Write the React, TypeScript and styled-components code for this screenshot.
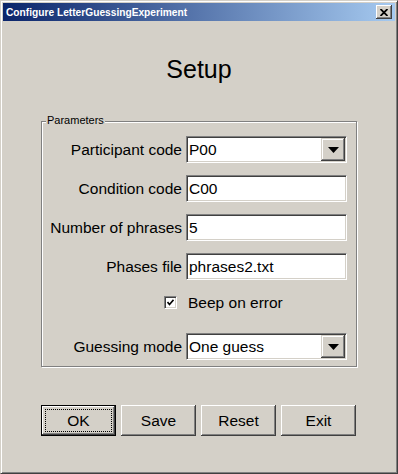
import React from "react";
import styled, { createGlobalStyle } from "styled-components";

const Global = createGlobalStyle`
  html, body { margin: 0; padding: 0; background: #D4D0C8; }
  body { font-family: "Liberation Sans", Arial, sans-serif; color: #000; }
  * { box-sizing: border-box; }
`;

const Window = styled.div`
  width: 398px;
  height: 474px;
  background: #d4d0c8;
  border: 1px solid;
  border-color: #d4d0c8 #404040 #404040 #d4d0c8;
  box-shadow: inset 1px 1px 0 #ffffff, inset -1px -1px 0 #808080;
  padding: 2px;
  display: flex;
  flex-direction: column;
`;

const TitleBar = styled.div`
  height: 18px;
  flex: none;
  display: flex;
  align-items: center;
  justify-content: space-between;
  padding: 0 3px 0 3px;
  background: linear-gradient(to right, #0a246a, #a6caf0);
`;

const TitleText = styled.span`
  color: #ffffff;
  font-weight: bold;
  font-size: 10.2px;
  line-height: 13px;
  white-space: nowrap;
`;

const CloseButton = styled.div`
  width: 16px;
  height: 14px;
  background: #d4d0c8;
  display: flex;
  align-items: center;
  justify-content: center;
  box-shadow: inset -1px -1px 0 #404040, inset 1px 1px 0 #ffffff,
    inset -2px -2px 0 #808080;
`;

const Body = styled.div`
  flex: 1;
  display: flex;
  flex-direction: column;
`;

const Heading = styled.h1`
  margin: 33px 0 37px;
  font-size: 25px;
  line-height: 30px;
  font-weight: normal;
  text-align: center;
`;

const Group = styled.div`
  position: relative;
  margin: 0 38px;
  border: 1px solid #808080;
  box-shadow: inset 1px 1px 0 #ffffff, 1px 1px 0 #ffffff;
  padding: 14px 9px 6px 0;
  display: grid;
  grid-template-columns: 1fr 161px;
  grid-template-rows: 27px 27px 27px 27px 29px 27px;
  column-gap: 4px;
  row-gap: 12px;
`;

const Legend = styled.span`
  position: absolute;
  top: -8px;
  left: 4px;
  padding: 0 1px;
  background: #d4d0c8;
  font-size: 11px;
  line-height: 13px;
`;

const Label = styled.label`
  align-self: center;
  justify-self: end;
  font-size: 15.5px;
  white-space: nowrap;
`;

const Sunken = styled.div`
  height: 27px;
  background: #ffffff;
  border: 1px solid;
  border-color: #808080 #ffffff #ffffff #808080;
  box-shadow: inset 1px 1px 0 #404040, inset -1px -1px 0 #d4d0c8;
  display: flex;
  align-items: stretch;
`;

const FieldText = styled.span`
  flex: 1;
  padding-left: 2px;
  font-size: 15.5px;
  line-height: 25px;
  white-space: nowrap;
`;

const DropButton = styled.div`
  width: 24px;
  margin: 1px 1px 1px 0;
  background: #d4d0c8;
  display: flex;
  align-items: center;
  justify-content: center;
  box-shadow: inset -1px -1px 0 #404040, inset 1px 1px 0 #d4d0c8,
    inset -2px -2px 0 #808080, inset 2px 2px 0 #ffffff;
`;

const CheckCell = styled.div`
  justify-self: end;
  align-self: start;
  margin: 4px 5px 0 0;
  width: 13px;
  height: 13px;
  background: #ffffff;
  border: 1px solid;
  border-color: #808080 #ffffff #ffffff #808080;
  box-shadow: inset 1px 1px 0 #404040, inset -1px -1px 0 #d4d0c8;
  display: flex;
  align-items: center;
  justify-content: center;
`;

const CheckText = styled.span`
  align-self: start;
  padding-left: 2px;
  font-size: 15.5px;
  line-height: 21px;
  white-space: nowrap;
`;

const ButtonRow = styled.div`
  display: flex;
  gap: 5px;
  padding-left: 38px;
  margin-top: 38px;
`;

const Button = styled.button<{ $default?: boolean }>`
  width: 75px;
  height: 31px;
  padding: 0;
  background: #d4d0c8;
  font-family: "Liberation Sans", Arial, sans-serif;
  font-size: 15.5px;
  color: #000;
  border: ${(p) => (p.$default ? "1px solid #000000" : "none")};
  box-shadow: inset -1px -1px 0 #404040, inset 1px 1px 0 #ffffff,
    inset -2px -2px 0 #808080, inset 2px 2px 0 #d4d0c8;
  outline: ${(p) => (p.$default ? "1px dotted #000000" : "none")};
  outline-offset: -5px;
`;

function Arrow() {
  return (
    <svg width="11" height="6" viewBox="0 0 11 6">
      <polygon points="0,0 11,0 5.5,6" fill="#000" />
    </svg>
  );
}

function Combo({ value }: { value: string }) {
  return (
    <Sunken>
      <FieldText>{value}</FieldText>
      <DropButton>
        <Arrow />
      </DropButton>
    </Sunken>
  );
}

function Field({ value }: { value: string }) {
  return (
    <Sunken>
      <FieldText>{value}</FieldText>
    </Sunken>
  );
}

export default function App() {
  return (
    <>
      <Global />
      <Window>
        <TitleBar>
          <TitleText>Configure LetterGuessingExperiment</TitleText>
          <CloseButton>
            <svg width="8" height="7" viewBox="0 0 8 7">
              <path d="M0.5,0 L7.5,7 M7.5,0 L0.5,7" stroke="#000" strokeWidth="1.8" />
            </svg>
          </CloseButton>
        </TitleBar>
        <Body>
          <Heading>Setup</Heading>
          <Group>
            <Legend>Parameters</Legend>
            <Label>Participant code</Label>
            <Combo value="P00" />
            <Label>Condition code</Label>
            <Field value="C00" />
            <Label>Number of phrases</Label>
            <Field value="5" />
            <Label>Phases file</Label>
            <Field value="phrases2.txt" />
            <CheckCell>
              <svg width="7" height="7" viewBox="0 0 7 7">
                <path d="M0.5,3 L2.5,5.5 L6.5,0.8" stroke="#000" strokeWidth="1.6" fill="none" />
              </svg>
            </CheckCell>
            <CheckText>Beep on error</CheckText>
            <Label>Guessing mode</Label>
            <Combo value="One guess" />
          </Group>
          <ButtonRow>
            <Button $default>OK</Button>
            <Button>Save</Button>
            <Button>Reset</Button>
            <Button>Exit</Button>
          </ButtonRow>
        </Body>
      </Window>
    </>
  );
}
